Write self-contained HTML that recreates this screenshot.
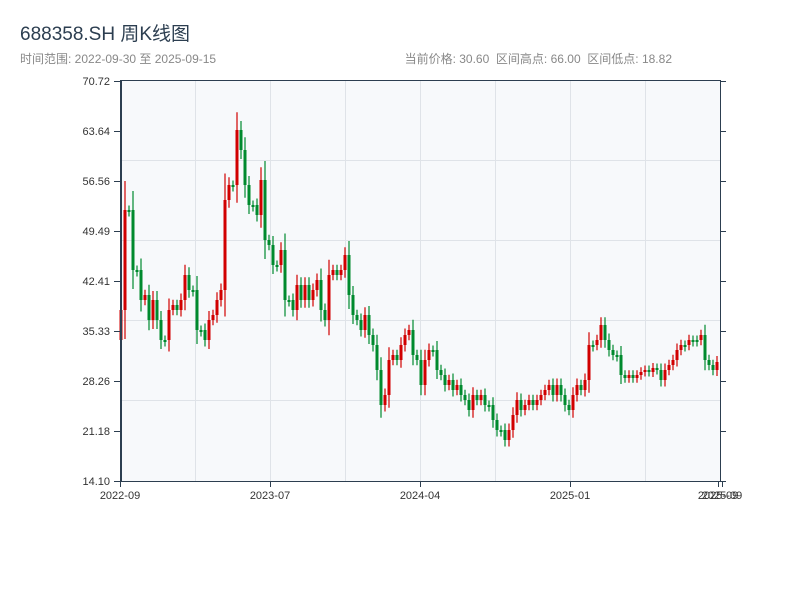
<!DOCTYPE html><html><head><meta charset="utf-8"><style>
body{margin:0;width:800px;height:600px;background:#fff;overflow:hidden;font-family:"Liberation Sans","Noto Sans CJK SC",sans-serif}
</style></head><body>
<svg id="s" width="800" height="600" xmlns="http://www.w3.org/2000/svg" style="position:absolute;left:0;top:0">
<text x="20" y="40" font-size="19" fill="#2c3e50" font-family="Liberation Sans,Noto Sans CJK SC,sans-serif">688358.SH 周K线图</text>
<text x="20" y="63" font-size="12" fill="#888" font-family="Liberation Sans,Noto Sans CJK SC,sans-serif">时间范围: 2022-09-30 至 2025-09-15</text>
<text x="672" y="63" font-size="12" fill="#888" text-anchor="end" font-family="Liberation Sans,Noto Sans CJK SC,sans-serif">当前价格: 30.60&#160;&#160;区间高点: 66.00&#160;&#160;区间低点: 18.82</text>
<rect x="120" y="80" width="600" height="401" fill="#f7f9fb"/>
<g stroke="#dfe3e8" stroke-width="1">
<line x1="195.5" y1="80" x2="195.5" y2="481"/><line x1="270.5" y1="80" x2="270.5" y2="481"/><line x1="345.5" y1="80" x2="345.5" y2="481"/><line x1="420.5" y1="80" x2="420.5" y2="481"/><line x1="495.5" y1="80" x2="495.5" y2="481"/><line x1="570.5" y1="80" x2="570.5" y2="481"/><line x1="645.5" y1="80" x2="645.5" y2="481"/>
<line x1="120" y1="160.5" x2="720" y2="160.5"/><line x1="120" y1="240.5" x2="720" y2="240.5"/><line x1="120" y1="320.5" x2="720" y2="320.5"/><line x1="120" y1="400.5" x2="720" y2="400.5"/>
</g>
<g id="c"></g>
<g stroke="#2c3e50" fill="none">
<line x1="120" y1="80.5" x2="720" y2="80.5" stroke-width="1"/>
<line x1="121" y1="80" x2="121" y2="482" stroke-width="2"/>
<line x1="720.5" y1="80" x2="720.5" y2="482" stroke-width="1"/>
<line x1="120" y1="481.5" x2="721" y2="481.5" stroke-width="1"/>
</g>
<g id="t" font-size="11" fill="#333" font-family="Liberation Sans,sans-serif"></g>
</svg>
<script>
var ys=[310,210,210,270,270,300,295,320,300,320,340,340,310,305,310,300,275,290,290,330,330,340,320,315,300,290,200,185,185,130,150,185,205,205,215,180,240,245,265,265,250,300,300,310,285,300,285,300,290,280,310,320,275,270,275,270,255,295,315,320,330,315,335,345,370,405,395,360,355,360,345,335,330,355,360,385,360,350,350,370,375,385,380,390,385,395,400,410,395,400,395,405,405,420,430,430,440,430,415,400,410,405,400,405,400,395,390,385,395,385,395,405,410,395,385,390,380,345,345,340,325,340,350,355,355,375,378,375,378,375,372,370,372,368,370,380,370,365,360,350,345,345,340,340,340,335,360,365,370,362];
var g=document.getElementById('c'),h='',prev=340,n=ys.length,sp=596/(n-1);
for(var i=0;i<n;i++){var x=121+i*sp,o=prev,c=ys[i];var up=c<o;var col=up?'#d10000':'#008a2e';
var t=Math.min(o,c),b=Math.max(o,c);if(b-t<2)b=t+2;var w=(b-t)*0.25+4;
h+='<line x1="'+x+'" x2="'+x+'" y1="'+(t-w)+'" y2="'+(b+w)+'" stroke="'+col+'" stroke-width="1.2"/>';
h+='<rect x="'+(x-1.5)+'" y="'+t+'" width="3" height="'+(b-t)+'" fill="'+col+'"/>';prev=c;}
g.innerHTML=h;
var tk=[[81,'70.72'],[131,'63.64'],[181,'56.56'],[231,'49.49'],[281,'42.41'],[331,'35.33'],[381,'28.26'],[431,'21.18'],[481,'14.10']],s='';
tk.forEach(function(a){s+='<text x="110" y="'+(a[0]+4)+'" text-anchor="end">'+a[1]+'</text><line x1="114" x2="120" y1="'+(a[0]+.5)+'" y2="'+(a[0]+.5)+'" stroke="#2c3e50"/><line x1="720" x2="726" y1="'+(a[0]+.5)+'" y2="'+(a[0]+.5)+'" stroke="#2c3e50"/>';});
[[120,'2022-09'],[270,'2023-07'],[420,'2024-04'],[570,'2025-01'],[718,'2025-09'],[722,'2025-09']].forEach(function(a){s+='<line x1="'+(a[0]+.5)+'" x2="'+(a[0]+.5)+'" y1="482" y2="487" stroke="#2c3e50"/><text x="'+a[0]+'" y="499" text-anchor="middle">'+a[1]+'</text>';});
document.getElementById('t').innerHTML=s;
</script>
</body></html>
